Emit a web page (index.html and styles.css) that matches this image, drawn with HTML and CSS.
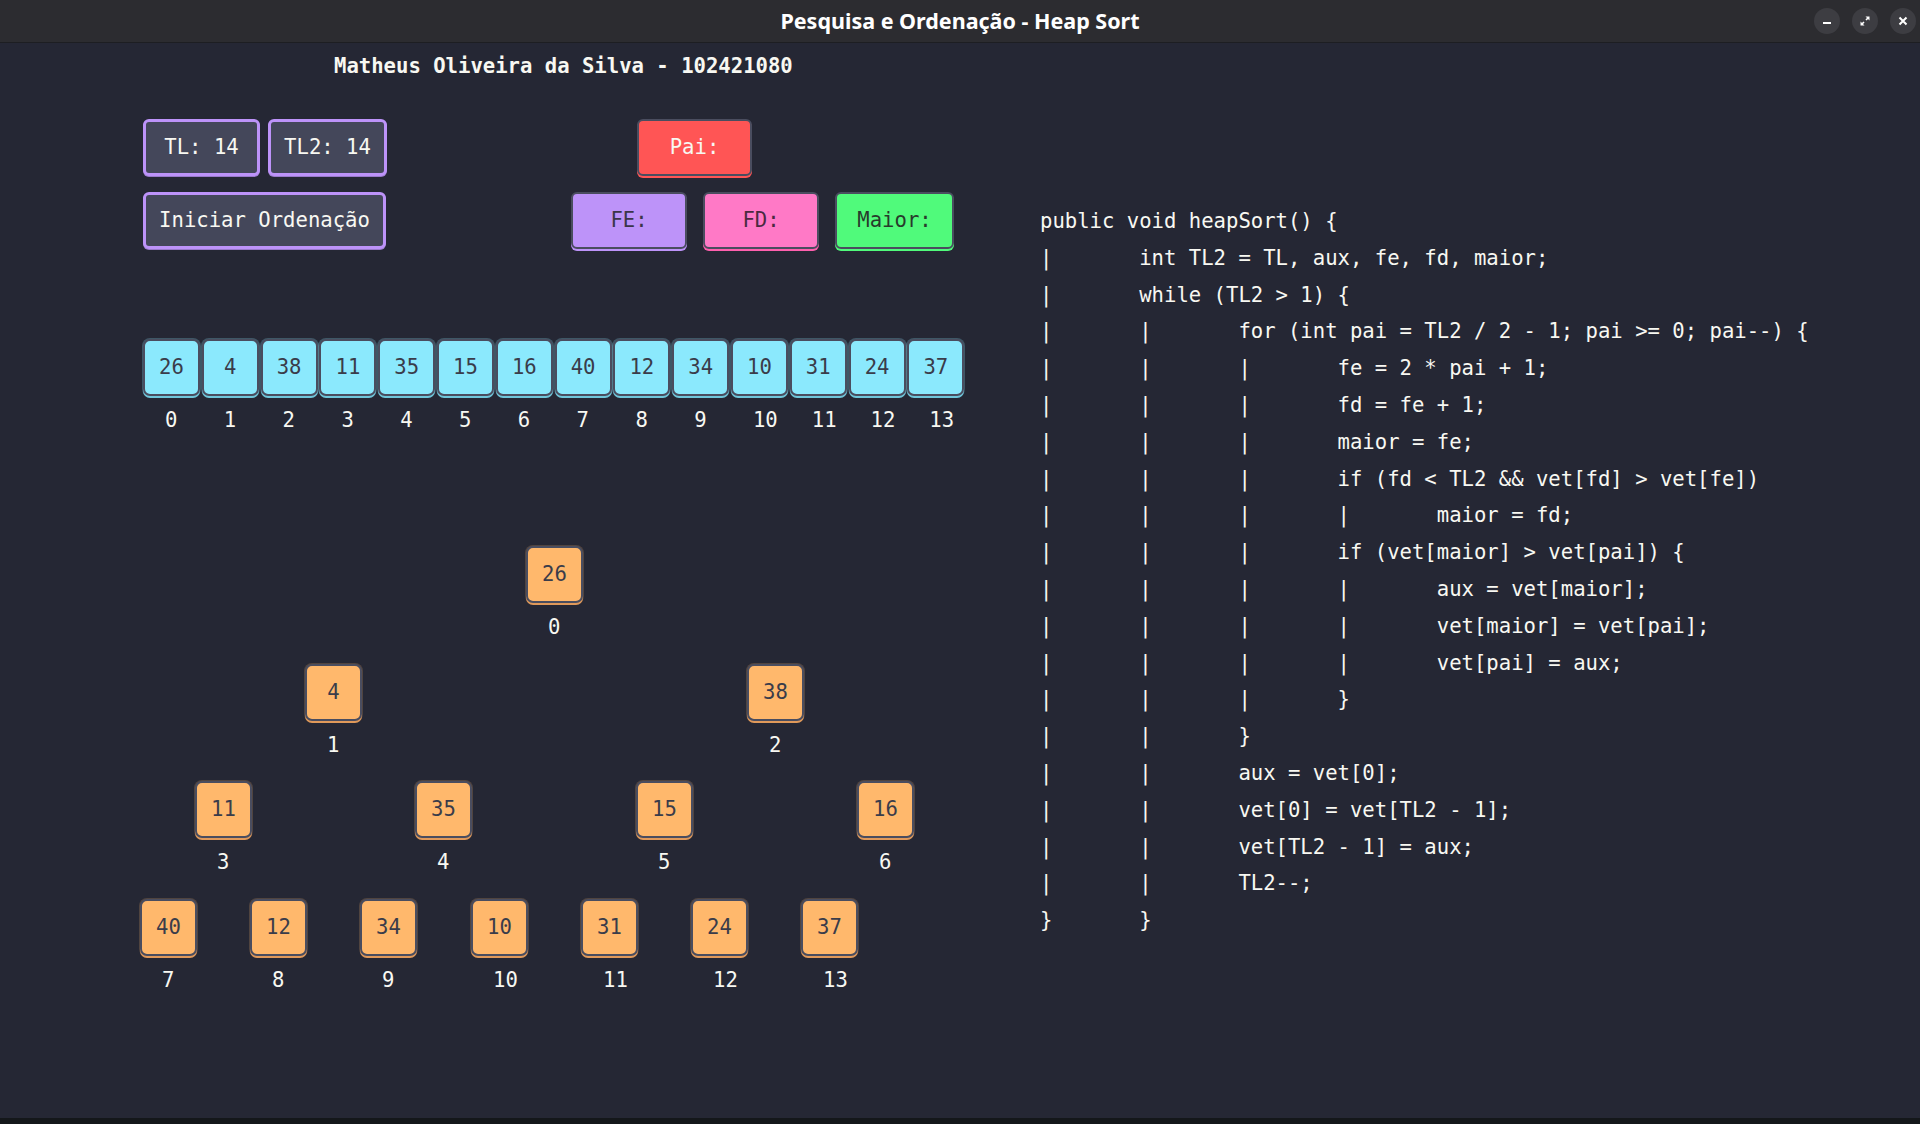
FILE: index.html
```html
<!DOCTYPE html>
<html lang="pt">
<head>
<meta charset="utf-8">
<title>Pesquisa e Ordenação - Heap Sort</title>
<link rel="stylesheet" href="styles.css">
</head>
<body>
<div class="window">
  <header class="titlebar">
    <span class="title">Pesquisa e Ordenação - Heap Sort</span>
    <div class="wbtns">
      <span class="wbtn"><svg width="12" height="12" viewBox="0 0 12 12"><rect x="2" y="7" width="8" height="2" fill="#fff"/></svg></span>
      <span class="wbtn"><svg width="12" height="12" viewBox="0 0 12 12"><path d="M6.5 1.5h4v4z M5.5 10.5h-4v-4z" fill="#fff"/><path d="M9 3L7 5M3 9l2-2" stroke="#fff" stroke-width="1.6"/></svg></span>
      <span class="wbtn"><svg width="12" height="12" viewBox="0 0 12 12"><path d="M2.5 2.5l7 7M9.5 2.5l-7 7" stroke="#fff" stroke-width="2"/></svg></span>
    </div>
  </header>
  <main class="main">
    <section class="left">
      <div class="header">Matheus Oliveira da Silva - 102421080</div>
      <div class="controls">
        <div class="row">
          <div class="btn btn-info w117">TL: 14</div>
          <div class="btn btn-info w119">TL2: 14</div>
          <div class="btn btn-red pai">Pai:</div>
        </div>
        <div class="row">
          <div class="btn btn-info w243">Iniciar Ordenação</div>
          <div class="btn btn-purple fe">FE:</div>
          <div class="btn btn-pink">FD:</div>
          <div class="btn btn-green">Maior:</div>
        </div>
      </div>
      <div class="array">
        <div class="slot"><div class="cell">26</div><div class="idx">0</div></div>
        <div class="slot"><div class="cell">4</div><div class="idx">1</div></div>
        <div class="slot"><div class="cell">38</div><div class="idx">2</div></div>
        <div class="slot"><div class="cell">11</div><div class="idx">3</div></div>
        <div class="slot"><div class="cell">35</div><div class="idx">4</div></div>
        <div class="slot"><div class="cell">15</div><div class="idx">5</div></div>
        <div class="slot"><div class="cell">16</div><div class="idx">6</div></div>
        <div class="slot"><div class="cell">40</div><div class="idx">7</div></div>
        <div class="slot"><div class="cell">12</div><div class="idx">8</div></div>
        <div class="slot"><div class="cell">34</div><div class="idx">9</div></div>
        <div class="slot"><div class="cell">10</div><div class="idx">10</div></div>
        <div class="slot"><div class="cell">31</div><div class="idx">11</div></div>
        <div class="slot"><div class="cell">24</div><div class="idx">12</div></div>
        <div class="slot"><div class="cell">37</div><div class="idx">13</div></div>
      </div>
      <div class="tree">
        <div class="node" style="left:526px;top:0px"><div class="nbox">26</div><div class="idx">0</div></div>
        <div class="node" style="left:305px;top:118px"><div class="nbox">4</div><div class="idx">1</div></div>
        <div class="node" style="left:747px;top:118px"><div class="nbox">38</div><div class="idx">2</div></div>
        <div class="node" style="left:195px;top:235px"><div class="nbox">11</div><div class="idx">3</div></div>
        <div class="node" style="left:415px;top:235px"><div class="nbox">35</div><div class="idx">4</div></div>
        <div class="node" style="left:636px;top:235px"><div class="nbox">15</div><div class="idx">5</div></div>
        <div class="node" style="left:857px;top:235px"><div class="nbox">16</div><div class="idx">6</div></div>
        <div class="node" style="left:140px;top:353px"><div class="nbox">40</div><div class="idx">7</div></div>
        <div class="node" style="left:250px;top:353px"><div class="nbox">12</div><div class="idx">8</div></div>
        <div class="node" style="left:360px;top:353px"><div class="nbox">34</div><div class="idx">9</div></div>
        <div class="node" style="left:471px;top:353px"><div class="nbox">10</div><div class="idx">10</div></div>
        <div class="node" style="left:581px;top:353px"><div class="nbox">31</div><div class="idx">11</div></div>
        <div class="node" style="left:691px;top:353px"><div class="nbox">24</div><div class="idx">12</div></div>
        <div class="node" style="left:801px;top:353px"><div class="nbox">37</div><div class="idx">13</div></div>
      </div>
    </section>
    <section class="code">
<div class="line">public void heapSort() {</div>
<div class="line">|       int TL2 = TL, aux, fe, fd, maior;</div>
<div class="line">|       while (TL2 &gt; 1) {</div>
<div class="line">|       |       for (int pai = TL2 / 2 - 1; pai &gt;= 0; pai--) {</div>
<div class="line">|       |       |       fe = 2 * pai + 1;</div>
<div class="line">|       |       |       fd = fe + 1;</div>
<div class="line">|       |       |       maior = fe;</div>
<div class="line">|       |       |       if (fd &lt; TL2 &amp;&amp; vet[fd] &gt; vet[fe])</div>
<div class="line">|       |       |       |       maior = fd;</div>
<div class="line">|       |       |       if (vet[maior] &gt; vet[pai]) {</div>
<div class="line">|       |       |       |       aux = vet[maior];</div>
<div class="line">|       |       |       |       vet[maior] = vet[pai];</div>
<div class="line">|       |       |       |       vet[pai] = aux;</div>
<div class="line">|       |       |       }</div>
<div class="line">|       |       }</div>
<div class="line">|       |       aux = vet[0];</div>
<div class="line">|       |       vet[0] = vet[TL2 - 1];</div>
<div class="line">|       |       vet[TL2 - 1] = aux;</div>
<div class="line">|       |       TL2--;</div>
<div class="line">}       }</div>
    </section>
  </main>
  <div class="bottom"></div>
</div>
</body>
</html>
```
FILE: styles.css
```css
* { box-sizing: border-box; }
html, body { margin: 0; padding: 0; }
body {
  width: 1920px;
  height: 1124px;
  overflow: hidden;
  background: #252734;
  font-family: "DejaVu Sans Mono", "Liberation Mono", monospace;
  color: #f8f8f2;
}
.window { display: flex; flex-direction: column; height: 1124px; }
.titlebar {
  position: relative;
  height: 43px;
  flex: none;
  background: #2c2c30;
  border-bottom: 1px solid #1d1e22;
  display: flex;
  align-items: center;
  justify-content: center;
}
.title {
  font-family: "Noto Sans", "Liberation Sans", sans-serif;
  font-weight: 700;
  font-size: 21.5px;
  color: #ffffff;
  margin-top: -2px;
  letter-spacing: 0;
}
.wbtns {
  position: absolute;
  right: 4px;
  top: 8px;
  display: flex;
  gap: 12px;
}
.wbtn {
  width: 26px;
  height: 26px;
  border-radius: 50%;
  background: #3d3d42;
  display: flex;
  align-items: center;
  justify-content: center;
}
.main {
  flex: 1;
  display: flex;
  background: #252734;
}
.left { width: 1040px; flex: none; font-size: 20.6px; }
.header {
  padding-left: 334px;
  padding-top: 11px;
  line-height: 24px;
  font-weight: 700;
  color: #f8f8f2;
}
.controls { margin-top: 41px; padding-left: 143px; display: flex; flex-direction: column; gap: 16px; }
.row { display: flex; gap: 8px; }
.btn {
  height: 57px;
  width: 116px;
  border-radius: 6px;
  display: flex;
  align-items: center;
  justify-content: center;
  line-height: 1;
}
.btn-info {
  background: #44475a;
  border: 3px solid #bd93f9;
  color: #f8f8f2;
  box-shadow: 0 1px 0 #9a7acb;
}
.w117 { width: 117px; }
.w119 { width: 119px; }
.w243 { width: 243px; }
.btn-red, .btn-purple, .btn-pink, .btn-green {
  border: 2px solid #4a4d5f;
}
.btn-red { background: #ff5555; color: #f8f8f2; box-shadow: 0 2px 0 #ff5555; }
.btn-purple { background: #bd93f9; color: #3b3549; box-shadow: 0 2px 0 #bd93f9; }
.btn-pink { background: #ff79c6; color: #4a2a40; box-shadow: 0 2px 0 #ff5fae; margin-left: 8px; }
.btn-green { background: #50fa7b; color: #283a2c; box-shadow: 0 2px 0 #50fa7b; margin-left: 8px; width: 119px; }
.pai { margin-left: 242px; width: 115px; }
.fe { margin-left: 177px; }
.array { margin-top: 90px; padding-left: 143px; display: flex; gap: 1.8px; }
.slot { width: 57px; }
.cell, .nbox {
  width: 57px;
  height: 57px;
  border: 2px solid #4a4d5f;
  border-radius: 7px;
  display: flex;
  align-items: center;
  justify-content: center;
  color: #3a3c4a;
  line-height: 1;
}
.cell { background: #8be9fd; box-shadow: 0 2px 0 #6fc6da, 0 0 0 1px rgba(139,233,253,0.25); }
.nbox { background: #ffb86c; box-shadow: 0 2px 0 #e0995a, 0 0 0 1px rgba(255,184,108,0.2); }
.idx {
  margin-top: 12px;
  line-height: 24px;
  padding-left: 22px;
  color: #f8f8f2;
  white-space: nowrap;
}
.tree { position: relative; margin-top: 114px; height: 460px; }
.node { position: absolute; width: 57px; }
.code {
  padding-top: 160px;
  font-size: 20.6px;
  color: #f8f8f2;
}
.line { white-space: pre; line-height: 36.8px; }
.bottom { height: 6px; flex: none; background: #14171a; }
```
